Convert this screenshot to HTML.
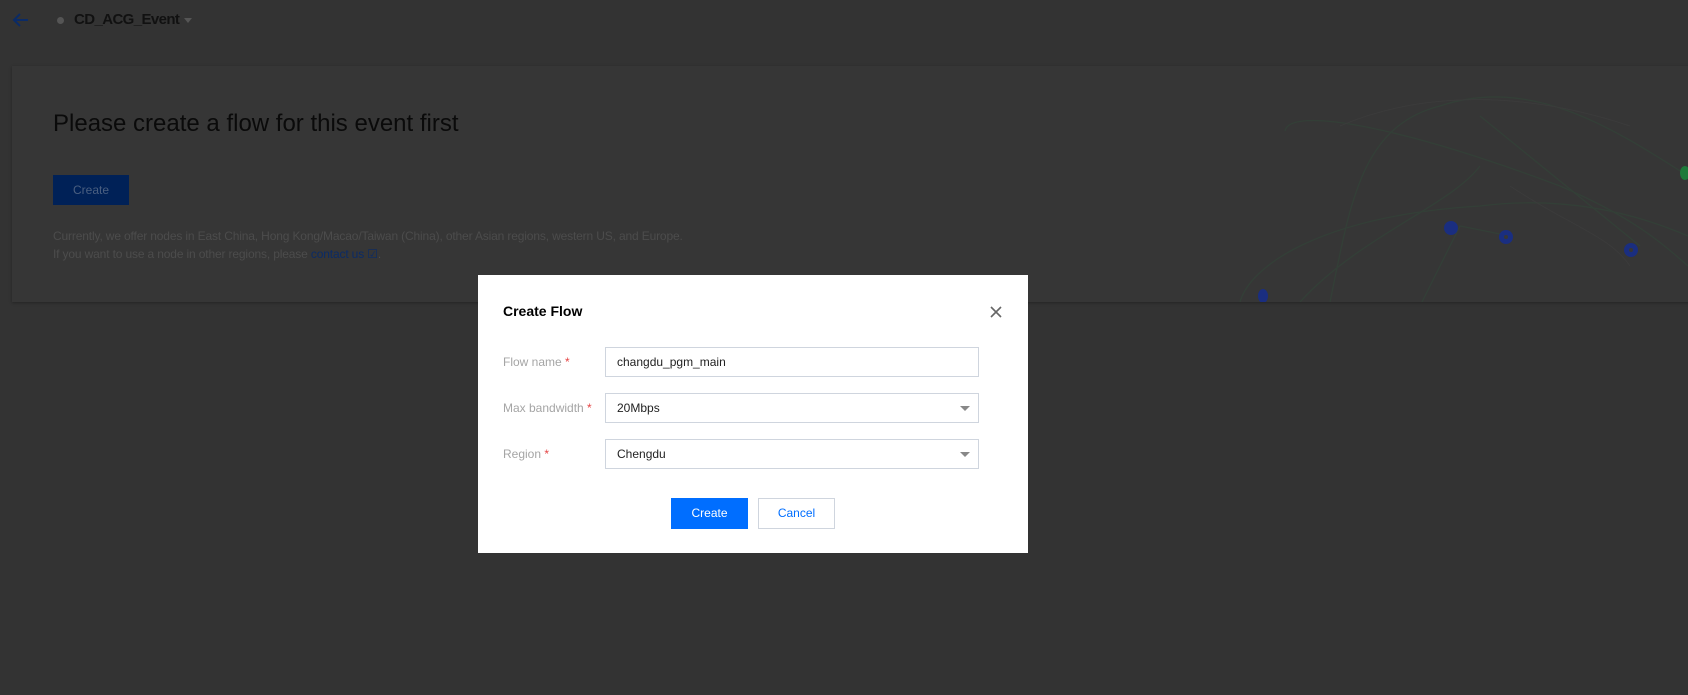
<!DOCTYPE html>
<html><head><meta charset="utf-8"><style>
*{margin:0;padding:0;box-sizing:border-box}
body{width:1688px;height:695px;background:#333;font-family:"Liberation Sans",sans-serif;position:relative;overflow:hidden}
.abs{position:absolute}
.card{left:12px;top:66px;width:1690px;height:236px;background:#363636;box-shadow:0 1px 3px rgba(0,0,0,.3)}
.modal{left:478px;top:275px;width:550px;height:278px;background:#fff}
.lbl{font-size:12px;color:#a5a5a5;left:25px}
.lbl b{color:#e54545;font-weight:normal}
.inp{left:127px;width:374px;height:30px;border:1px solid #cfd5de;font-size:12px;color:#222;padding:7px 11px;line-height:14px}
.tri{position:absolute;right:8px;top:12px;width:0;height:0;border-left:5px solid transparent;border-right:5px solid transparent;border-top:5px solid #888}
</style></head><body>
<svg class="abs" style="left:12px;top:12px" width="18" height="16" viewBox="0 0 18 16"><path d="M16 8H3M8 2L2 8l6 6" stroke="#0b2b66" stroke-width="2" fill="none"/></svg>
<div class="abs" style="left:57px;top:17px;width:7px;height:7px;border-radius:50%;background:#555"></div>
<div class="abs" style="left:74px;top:11px;font-size:15px;font-weight:bold;color:#111;letter-spacing:-0.6px">CD_ACG_Event</div>
<div class="abs" style="left:184px;top:18px;border-left:4px solid transparent;border-right:4px solid transparent;border-top:5px solid #555"></div>
<div class="abs card"></div>
<svg class="abs" style="left:1210px;top:66px" width="478" height="236">
<g fill="none" stroke="#334238" stroke-width="1.3" opacity=".8">
<path d="M30 236C40 200 110 150 270 140C350 130 420 145 478 170"/>
<path d="M75 65C80 40 190 60 350 120C420 150 450 175 478 200"/>
<path d="M90 236C150 170 240 140 270 100"/>
<path d="M120 236C140 140 150 60 230 40C320 10 400 60 478 110"/>
<path d="M210 240L250 160L300 170"/>
<path d="M270 50L430 180"/>
</g>
<g fill="none" stroke="#3b3b3b" stroke-width="1"><path d="M130 60C200 30 300 20 420 60"/><path d="M300 120C360 160 400 170 420 200"/></g>
<circle cx="241" cy="162" r="7" fill="#1a2e80"/><circle cx="296" cy="171" r="7" fill="#1a2e80"/><circle cx="296" cy="171" r="2" fill="#363636"/>
<circle cx="421" cy="184" r="7" fill="#1a2e80"/><circle cx="421" cy="184" r="2" fill="#363636"/>
<ellipse cx="53" cy="230" rx="5" ry="7" fill="#1a2e80"/>
<ellipse cx="475" cy="107" rx="5" ry="7" fill="#1e7a3a"/>
</svg>
<div class="abs" style="left:53px;top:110px;font-size:24px;color:#0a0a0a">Please create a flow for this event first</div>
<div class="abs" style="left:53px;top:175px;width:76px;height:30px;background:#002157;color:#4a5f80;font-size:12px;text-align:center;line-height:30px">Create</div>
<div class="abs" style="left:53px;top:227px;font-size:12px;color:#4c4c4c;line-height:18px;letter-spacing:-0.15px">Currently, we offer nodes in East China, Hong Kong/Macao/Taiwan (China), other Asian regions, western US, and Europe.<br>If you want to use a node in other regions, please <span style="color:#0b2b66">contact us ☑</span>.</div>
<div class="abs modal">
<div class="abs" style="left:25px;top:28px;font-size:14px;font-weight:bold;color:#000">Create Flow</div>
<svg class="abs" style="left:512px;top:31px" width="12" height="12"><path d="M1 1L11 11M11 1L1 11" stroke="#666" stroke-width="1.6"/></svg>
<div class="abs lbl" style="top:80px">Flow name <b>*</b></div>
<div class="abs lbl" style="top:126px">Max bandwidth <b>*</b></div>
<div class="abs lbl" style="top:172px">Region <b>*</b></div>
<div class="abs inp" style="top:72px">changdu_pgm_main</div>
<div class="abs inp" style="top:118px">20Mbps<span class="tri"></span></div>
<div class="abs inp" style="top:164px">Chengdu<span class="tri"></span></div>
<div class="abs" style="left:193px;top:223px;width:77px;height:31px;background:#006eff;color:#fff;font-size:12px;text-align:center;line-height:31px">Create</div>
<div class="abs" style="left:280px;top:223px;width:77px;height:31px;border:1px solid #cfd5de;color:#006eff;font-size:12px;text-align:center;line-height:29px">Cancel</div>
</div>
</body></html>
